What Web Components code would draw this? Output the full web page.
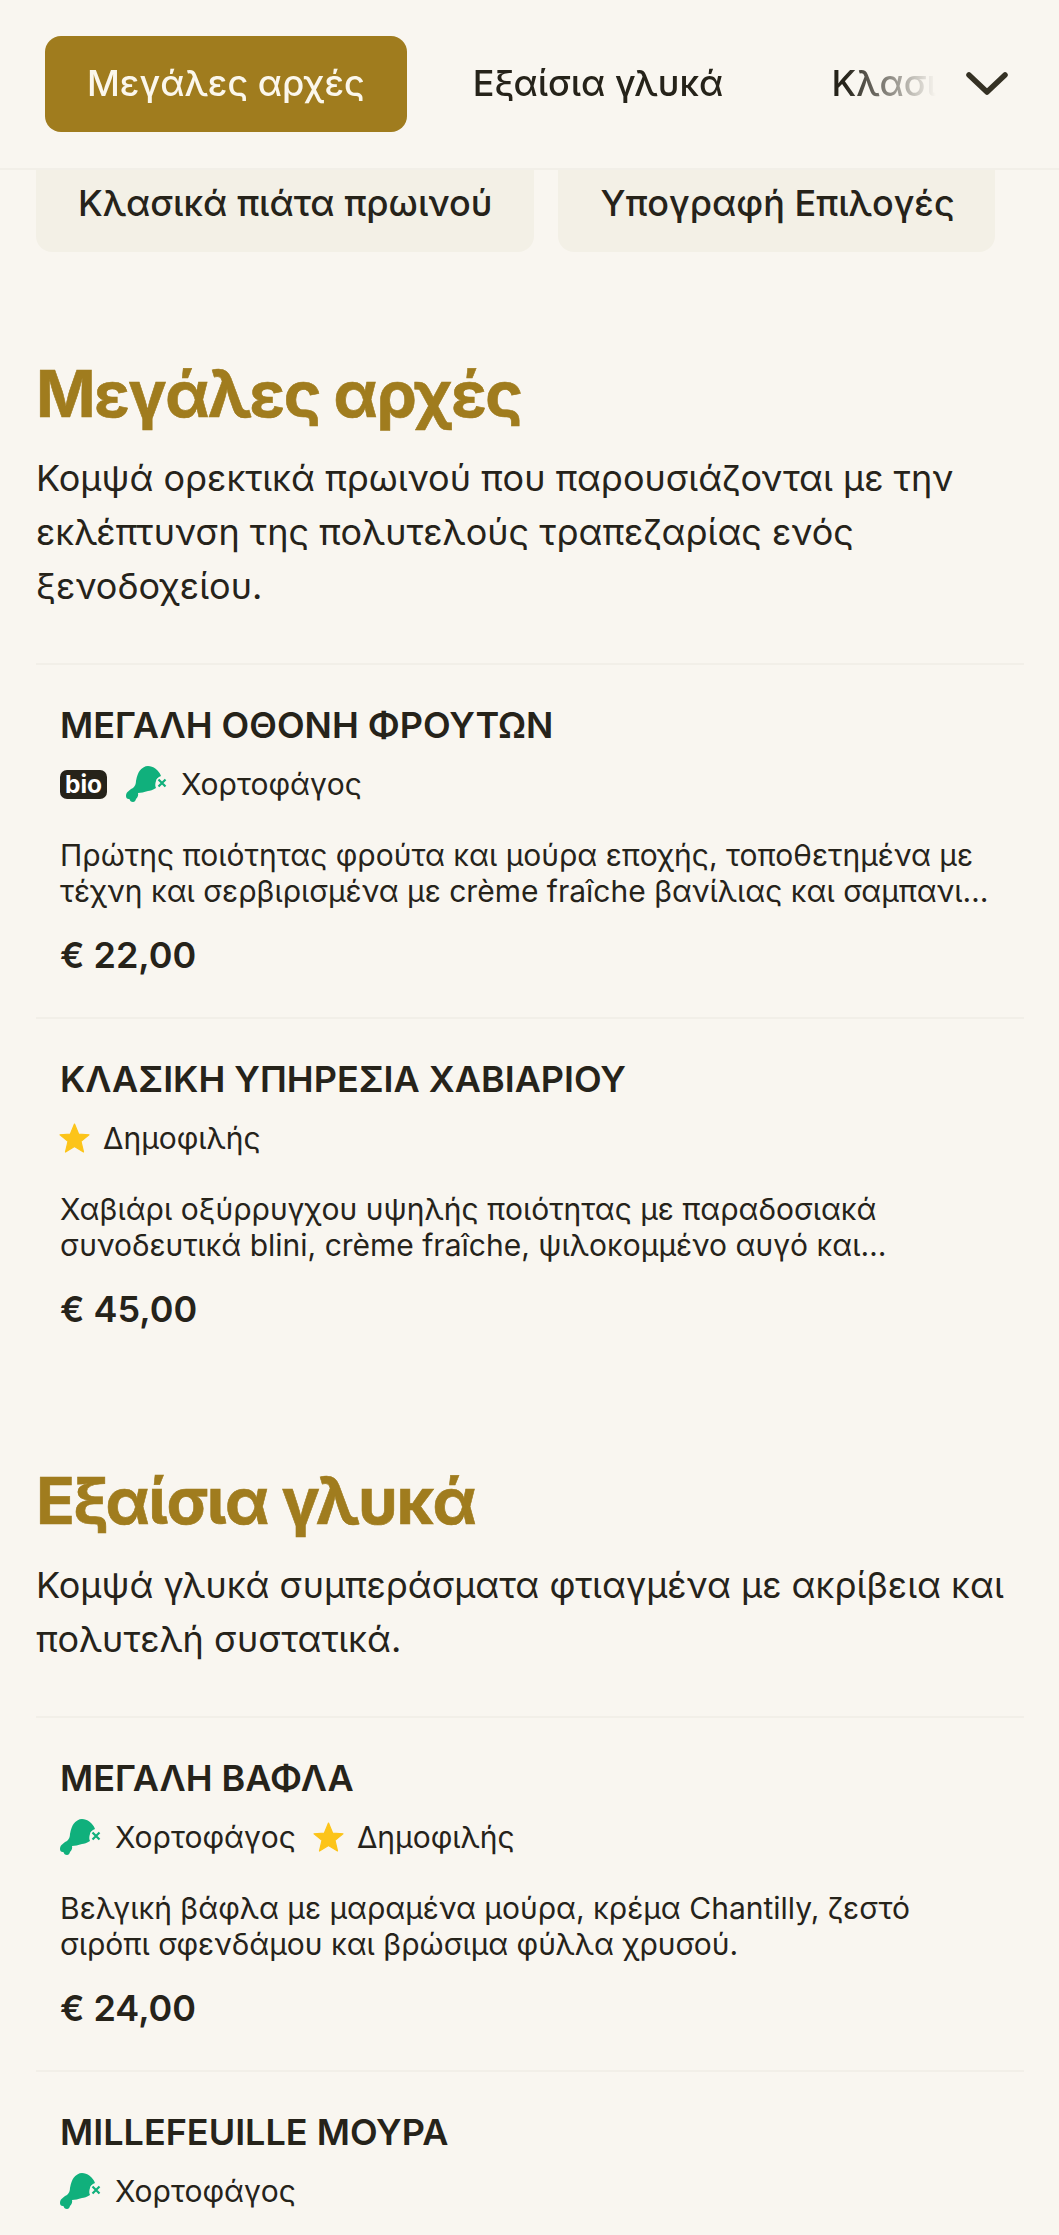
<!DOCTYPE html>
<html lang="el">
<head>
<meta charset="utf-8">
<title>Μενού</title>
<style>
  html, body { margin: 0; padding: 0; background: #f9f6f0; }
  body { height: 2235px; overflow: hidden; font-family: Inter, "Noto Sans", sans-serif; color: #26231a; }
</style>
</head>
<body>
<menu-nav>
  <nav-pill active>Μεγάλες αρχές</nav-pill>
  <nav-pill>Εξαίσια γλυκά</nav-pill>
  <nav-pill>Κλασικά πιάτα πρωινού</nav-pill>
</menu-nav>
<chip-row>
  <menu-chip>Κλασικά πιάτα πρωινού</menu-chip>
  <menu-chip>Υπογραφή Επιλογές</menu-chip>
</chip-row>
<menu-section heading="Μεγάλες αρχές" intro="Κομψά ορεκτικά πρωινού που παρουσιάζονται με την εκλέπτυνση της πολυτελούς τραπεζαρίας ενός ξενοδοχείου.">
  <menu-item name="ΜΕΓΑΛΗ ΟΘΟΝΗ ΦΡΟΥΤΩΝ" price="€ 22,00">
    <diet-tag slot="tags" kind="bio"></diet-tag>
    <diet-tag slot="tags" kind="veg">Χορτοφάγος</diet-tag>
    Πρώτης ποιότητας φρούτα και μούρα εποχής, τοποθετημένα με τέχνη και σερβιρισμένα με crème fraîche βανίλιας και σαμπανι…
  </menu-item>
  <menu-item name="ΚΛΑΣΙΚΗ ΥΠΗΡΕΣΙΑ ΧΑΒΙΑΡΙΟΥ" price="€ 45,00">
    <diet-tag slot="tags" kind="star">Δημοφιλής</diet-tag>
    Χαβιάρι οξύρρυγχου υψηλής ποιότητας με παραδοσιακά συνοδευτικά blini, crème fraîche, ψιλοκομμένο αυγό και…
  </menu-item>
</menu-section>
<menu-section heading="Εξαίσια γλυκά" intro="Κομψά γλυκά συμπεράσματα φτιαγμένα με ακρίβεια και πολυτελή συστατικά.">
  <menu-item name="ΜΕΓΑΛΗ ΒΑΦΛΑ" price="€ 24,00">
    <diet-tag slot="tags" kind="veg">Χορτοφάγος</diet-tag>
    <diet-tag slot="tags" kind="star">Δημοφιλής</diet-tag>
    Βελγική βάφλα με μαραμένα μούρα, κρέμα Chantilly, ζεστό σιρόπι σφενδάμου και βρώσιμα φύλλα χρυσού.
  </menu-item>
  <menu-item name="MILLEFEUILLE ΜΟΥΡΑ">
    <diet-tag slot="tags" kind="veg">Χορτοφάγος</diet-tag>
  </menu-item>
</menu-section>

<script>
class MenuNav extends HTMLElement {
  constructor() {
    super();
    this.attachShadow({ mode: "open" }).innerHTML = `
      <style>
        :host {
          display: flex;
          align-items: center;
          position: relative;
          z-index: 2;
          height: 170px;
          box-sizing: border-box;
          border-bottom: 2px solid #f2efe8;
          background: #f9f6f0;
        }
        .scroll {
          flex: 1;
          min-width: 0;
          display: flex;
          gap: 24px;
          padding-left: 45px;
          overflow: hidden;
          -webkit-mask-image: linear-gradient(to right, #000 845px, transparent 936px);
        }
        svg { flex: none; width: 42px; height: 24px; margin: 0 51px 0 30px; }
      </style>
      <div class="scroll"><slot></slot></div>
      <svg viewBox="0 0 42 24" fill="none" stroke="#353124" stroke-width="5.5" stroke-linecap="round" stroke-linejoin="round">
        <path d="M3 3 L21 20 L39 3"/>
      </svg>
    `;
  }
}

class NavPill extends HTMLElement {
  constructor() {
    super();
    this.attachShadow({ mode: "open" }).innerHTML = `
      <style>
        :host {
          display: block;
          flex: none;
          height: 96px;
          line-height: 94px;
          padding: 0 42px;
          border-radius: 16px;
          font-size: 36px;
          font-weight: 500;
          white-space: nowrap;
          color: #26231a;
        }
        :host([active]) {
          background: #a07c1e;
          color: #fbf7ec;
        }
      </style>
      <slot></slot>
    `;
  }
}

class ChipRow extends HTMLElement {
  constructor() {
    super();
    this.attachShadow({ mode: "open" }).innerHTML = `
      <style>
        :host {
          display: flex;
          gap: 24px;
          margin-top: -16px;
          padding-left: 36px;
        }
      </style>
      <slot></slot>
    `;
  }
}

class MenuChip extends HTMLElement {
  constructor() {
    super();
    this.attachShadow({ mode: "open" }).innerHTML = `
      <style>
        :host {
          display: block;
          height: 98px;
          line-height: 98px;
          padding: 0 42px;
          border-radius: 16px;
          background: #f3f0e6;
          font-size: 36px;
          font-weight: 500;
          white-space: nowrap;
        }
        :host(:last-child) { padding-right: 40px; }
      </style>
      <slot></slot>
    `;
  }
}

class MenuSection extends HTMLElement {
  constructor() {
    super();
    this.attachShadow({ mode: "open" }).innerHTML = `
      <style>
        :host {
          display: block;
          padding: 0 35px 0 36px;
          margin-top: 91px;
        }
        :host(:first-of-type) { margin-top: 103px; }
        h2 {
          margin: 0;
          font-size: 64px;
          line-height: 78px;
          font-weight: 700;
          letter-spacing: -1.5px;
          -webkit-text-stroke: 0.6px #a07c1e;
          color: #a07c1e;
        }
        p {
          margin: 18px 0 50px;
          font-size: 36px;
          line-height: 54px;
          font-weight: 400;
        }
      </style>
      <h2>${this.getAttribute("heading")}</h2>
      <p>${this.getAttribute("intro")}</p>
      <slot></slot>
    `;
  }
}

class MenuItem extends HTMLElement {
  constructor() {
    super();
    const price = this.getAttribute("price");
    this.attachShadow({ mode: "open" }).innerHTML = `
      <style>
        :host {
          display: block;
          border-top: 2px solid #f2efe8;
          padding: 38px 24px 40px;
        }
        h3 {
          margin: 0;
          font-size: 36px;
          line-height: 44px;
          font-weight: 600;
        }
        .tags {
          display: flex;
          align-items: center;
          gap: 18px;
          height: 42px;
          margin-top: 16px;
        }
        .desc {
          margin-top: 32px;
          font-size: 30px;
          line-height: 36px;
        }
        .price {
          margin-top: 24px;
          font-size: 36px;
          line-height: 44px;
          font-weight: 600;
        }
      </style>
      <h3>${this.getAttribute("name")}</h3>
      <div class="tags"><slot name="tags"></slot></div>
      <div class="desc"><slot></slot></div>
      ${price ? `<div class="price">${price}</div>` : ""}
    `;
  }
}

class DietTag extends HTMLElement {
  constructor() {
    super();
    const icons = {
      bio: `<span class="bio">bio</span>`,
      veg: `<svg width="41" height="36" viewBox="0 0 41 36">
              <path fill="#10b07c" d="M22 0 C27 0 33 4 35 10 C32 11 30 13 30 15 C29 18 29 20 30 22 C27 24 24 25 22 25 C18 26 15 27 12 27 C12.5 29 12 31 10 33 C9.5 35 8.5 36 7 36 C5 36 4 35 3.4 33 C1.5 33.5 0 32 0 30 C0 28 0.5 27 1.5 26 C3 24.5 5 23 7 22 C9 20 10 18 10 15 C11 10 12 7 13.5 5 C15.5 2 19 0 22 0 Z"/>
              <path fill="none" stroke="#10b07c" stroke-width="2.2" d="M32.5 13.5 L39.5 20.5 M39.5 13.5 L32.5 20.5"/>
            </svg>`,
      star: `<svg class="star" width="31" height="30" viewBox="0 0 31 30">
               <path fill="#fcc419" stroke="#fcc419" stroke-width="1.2" stroke-linejoin="round" d="M15.5 1 L19.6 11 L30 11.8 L22 18.4 L24.5 29 L15.5 23.4 L6.5 29 L9 18.4 L1 11.8 L11.4 11 Z"/>
             </svg>`
    };
    this.attachShadow({ mode: "open" }).innerHTML = `
      <style>
        :host {
          display: inline-flex;
          align-items: center;
          gap: 14px;
          font-size: 30px;
          white-space: nowrap;
        }
        .bio {
          display: block;
          width: 47px;
          height: 29px;
          margin-right: 1px;
          line-height: 28px;
          text-align: center;
          border-radius: 7px;
          background: #26231a;
          color: #fff;
          font-size: 24.5px;
          font-weight: 700;
        }
        svg { display: block; flex: none; }
        .star { margin: 0 -1px 0 -1px; }
      </style>
      ${icons[this.getAttribute("kind")] || ""}
      <slot></slot>
    `;
  }
}

customElements.define("menu-nav", MenuNav);
customElements.define("nav-pill", NavPill);
customElements.define("chip-row", ChipRow);
customElements.define("menu-chip", MenuChip);
customElements.define("menu-section", MenuSection);
customElements.define("menu-item", MenuItem);
customElements.define("diet-tag", DietTag);
</script>
</body>
</html>
